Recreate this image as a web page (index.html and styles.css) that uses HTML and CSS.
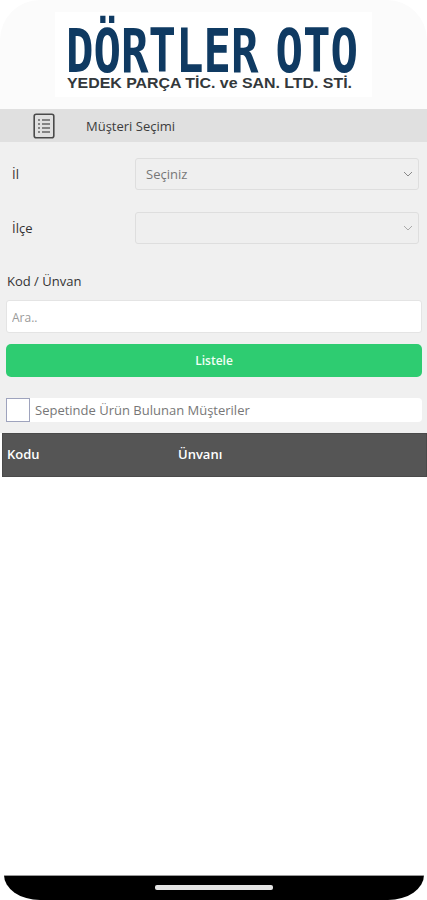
FILE: index.html
```html
<!DOCTYPE html>
<html lang="tr">
<head>
  <meta charset="UTF-8" />
  <meta name="viewport" content="width=device-width, initial-scale=1" />
  <title>Müşteri Seçimi</title>
  <link rel="stylesheet" href="styles.css">
</head>
<body>

<div class="screen">
  <!-- logo -->
  <header class="logo-area">
    <svg class="logo" width="427" height="109" viewBox="0 0 427 109">
      <rect x="55" y="12" width="317" height="85" fill="#ffffff" />
      <text class="logo-big" transform="translate(66 72) scale(1 1.42)" textLength="292" lengthAdjust="spacingAndGlyphs">DÖRTLER OTO</text>
      <text class="logo-small" x="67" y="88" textLength="285" lengthAdjust="spacingAndGlyphs">YEDEK PARÇA TİC. ve SAN. LTD. STİ.</text>
    </svg>
  </header>

  <div class="title-bar">
    <svg class="title-icon" width="22" height="26" viewBox="0 0 22 26" fill="none">
      <rect x="1.2" y="1.2" width="19.6" height="23.6" rx="2" stroke="#4a4a4a" stroke-width="1.6" />
      <path d="M5 7h2M9 7h8M5 11h2M9 11h8M5 15h2M9 15h8M5 19h2M9 19h8" stroke="#666" stroke-width="1.6" />
    </svg>
    <span>Müşteri Seçimi</span>
  </div>

  <section class="form">
    <div class="field-row">
      <label>İl</label>
      <div class="select">
        <span>Seçiniz</span>
        <svg width="10" height="6" viewBox="0 0 10 6" fill="none"><path d="M1 1l4 4 4-4" stroke="#888" /></svg>
      </div>
    </div>
    <div class="field-row second">
      <label>İlçe</label>
      <div class="select">
        <span></span>
        <svg width="10" height="6" viewBox="0 0 10 6" fill="none"><path d="M1 1l4 4 4-4" stroke="#aaa" /></svg>
      </div>
    </div>

    <div class="search-label">Kod / Ünvan</div>
    <input class="search-input" type="text" placeholder="Ara.." />
    <button class="list-btn">Listele</button>

    <div class="basket-row">
      <span class="checkbox"></span>
      <span>Sepetinde Ürün Bulunan Müşteriler</span>
    </div>
  </section>

  <div class="table-head">
    <div class="col-code">Kodu</div>
    <div class="col-title">Ünvanı</div>
  </div>

  <div class="table-body"></div>

  <!-- telefon alt kenari -->
  <footer class="phone-bottom">
    <div class="home-bar"></div>
  </footer>
</div>

</body>
</html>
```

FILE: styles.css
```css
* {
  box-sizing: border-box;
}

body {
  margin: 0;
  background: #ffffff;
  font-family: 'Open Sans', 'Noto Sans', sans-serif;
  color: #333;
}

.screen {
  display: flex;
  flex-direction: column;
  height: 900px;
  overflow: hidden;
}

.logo-area {
  height: 109px;
  background: #fbfbfb;
  border-radius: 40px 40px 0 0;
}

.logo {
  display: block;
}

.logo-big {
  font-family: 'DejaVu Sans Mono', 'Liberation Mono', monospace;
  font-size: 43px;
  font-weight: 700;
  word-spacing: -10px;
  fill: #0f3a62;
}

.logo-small {
  font-family: 'Liberation Sans', sans-serif;
  font-size: 14px;
  font-weight: 700;
  fill: #33383b;
}

.title-bar {
  height: 33px;
  background: #e0e0e0;
  display: flex;
  align-items: center;
  padding-left: 33px;
  font-size: 13px;
  color: #3c3c3c;
}

.title-icon {
  margin-right: 31px;
}

.form {
  height: 291px;
  background: #f0f0f0;
  padding: 16px 5px 0 6px;
}

.field-row {
  display: flex;
  align-items: center;
  height: 32px;
  font-size: 13px;
  color: #333;
}

.field-row.second {
  margin-top: 22px;
}

.field-row label {
  width: 129px;
  padding-left: 6px;
}

.select {
  flex: 1;
  height: 32px;
  margin-right: 3px;
  display: flex;
  align-items: center;
  justify-content: space-between;
  padding: 0 5px 0 10px;
  background: #efefef;
  border: 1px solid #dedede;
  border-radius: 3px;
  font-size: 13px;
  color: #777;
}

.search-label {
  margin-top: 27px;
  height: 20px;
  padding-left: 1px;
  font-size: 13px;
  line-height: 20px;
  color: #333;
}

.search-input {
  display: block;
  width: 100%;
  height: 33px;
  margin-top: 9px;
  padding: 2px 5px 0;
  background: #ffffff;
  border: 1px solid #e4e4e4;
  border-radius: 3px;
  font-family: inherit;
  font-size: 12px;
}

.search-input::placeholder {
  color: #9a9a9a;
}

.list-btn {
  display: block;
  width: 100%;
  height: 33px;
  margin-top: 11px;
  background: #2ecc71;
  border: none;
  border-radius: 5px;
  color: #f2fff6;
  font-family: inherit;
  font-size: 12px;
  font-weight: 600;
}

.basket-row {
  display: flex;
  align-items: center;
  height: 24px;
  margin-top: 21px;
  background: #ffffff;
  border-radius: 4px;
  font-size: 13px;
  color: #777;
}

.checkbox {
  width: 24px;
  height: 24px;
  margin-right: 5px;
  background: #ffffff;
  border: 1px solid #9ea3bd;
}

.table-head {
  height: 44px;
  margin-left: 2px;
  padding-bottom: 2px;
  display: flex;
  align-items: center;
  background: #555555;
  border: 1px solid #4a4a4a;
  color: #ffffff;
  font-size: 13px;
  font-weight: 600;
}

.col-code {
  width: 175px;
  padding-left: 4px;
}

.table-body {
  flex: 1;
  background: #ffffff;
}

.phone-bottom {
  height: 25px;
  margin: 0 3px 0 4px;
  background: #000000;
  border-radius: 0 0 36px 36px / 0 0 25px 25px;
  border-top: 1px solid #999;
  display: flex;
  justify-content: center;
  padding-top: 9px;
}

.home-bar {
  width: 118px;
  height: 5px;
  background: #e4e4e4;
  border-radius: 2px;
}
```
